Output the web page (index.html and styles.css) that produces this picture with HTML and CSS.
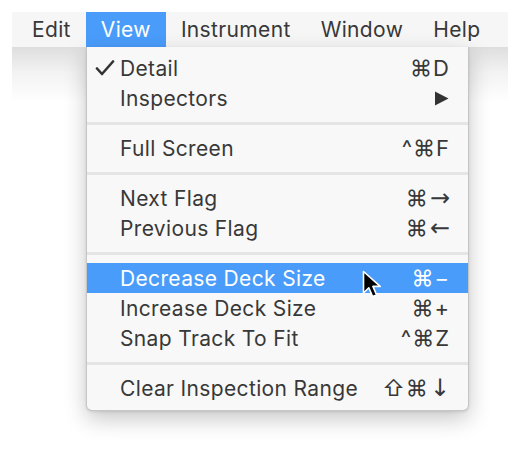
FILE: index.html
```html
<!DOCTYPE html>
<html>
<head>
<meta charset="utf-8">
<link rel="stylesheet" href="styles.css">
</head>
<body>
<div class="stage">
  <div class="menubar">
    <div class="mb-item">Edit</div>
    <div class="mb-item active">View</div>
    <div class="mb-item">Instrument</div>
    <div class="mb-item">Window</div>
    <div class="mb-item">Help</div>
  </div>
  <div class="bar-shadow"></div>

  <div class="menu">
    <div class="row">
      <span class="check"><svg width="20" height="16" viewBox="0 0 20 16"><path d="M2 8.5 L7 14 L18 1.5" fill="none" stroke="#333" stroke-width="2.6" stroke-linecap="round" stroke-linejoin="round"/></svg></span>
      <span class="label">Detail</span><span class="key">⌘D</span>
    </div>
    <div class="row">
      <span class="label">Inspectors</span>
      <span class="key"><svg class="sub" width="15" height="15" viewBox="0 0 15 15"><path d="M1 0.5 L14.5 7.5 L1 14.5 Z" fill="#333"/></svg></span>
    </div>
    <div class="sep"></div>
    <div class="row"><span class="label">Full Screen</span><span class="key">^⌘F</span></div>
    <div class="sep"></div>
    <div class="row"><span class="label">Next Flag</span><span class="key">⌘<span class="arrow">→</span></span></div>
    <div class="row"><span class="label">Previous Flag</span><span class="key">⌘<span class="arrow">←</span></span></div>
    <div class="sep"></div>
    <div class="row hl"><span class="label">Decrease Deck Size</span><span class="key">⌘−</span></div>
    <div class="row"><span class="label">Increase Deck Size</span><span class="key">⌘+</span></div>
    <div class="row"><span class="label">Snap Track To Fit</span><span class="key">^⌘Z</span></div>
    <div class="sep"></div>
    <div class="row"><span class="label">Clear Inspection Range</span><span class="key">⇧⌘<span class="arrow">↓</span></span></div>
  </div>

  <svg class="cursor" width="24" height="32" viewBox="0 0 24 32">
    <path d="M1.5 1.5 L1.5 23 L6.8 17.8 L10.6 26.6 L14.6 24.9 L10.9 16.4 L18.2 16.4 Z" fill="#000" stroke="#fff" stroke-width="1.6" stroke-linejoin="round"/>
  </svg>
</div>
</body>
</html>
```

FILE: styles.css
```css
html, body {
  margin: 0;
  padding: 0;
  background: #ffffff;
}
body {
  width: 521px;
  height: 452px;
  overflow: hidden;
  font-family: Inter, "Liberation Sans", sans-serif;
  color: #383838;
}
.stage {
  position: relative;
  width: 521px;
  height: 452px;
  padding-top: 12px;
  box-sizing: border-box;
}
.menubar {
  margin-left: 12px;
  width: 496px;
  height: 35px;
  background: #f6f6f6;
  display: flex;
  align-items: stretch;
  padding-left: 5px;
  box-sizing: border-box;
  font-size: 21px;
  letter-spacing: 0.35px;
}
.mb-item {
  display: flex;
  align-items: center;
  padding: 0 15px;
  line-height: 35px;
}
.mb-item.active {
  background: #4a9cfb;
  color: #ffffff;
}
.bar-shadow {
  margin-left: 12px;
  width: 496px;
  height: 55px;
  background: linear-gradient(to bottom, rgba(0,0,0,0.13), rgba(0,0,0,0.05) 45%, rgba(0,0,0,0));
}
.menu {
  position: absolute;
  left: 86px;
  top: 47px;
  width: 383px;
  padding: 6px 0 7px;
  box-sizing: border-box;
  background: #f8f8f8;
  border: 1px solid rgba(0,0,0,0.2);
  border-top: none;
  border-radius: 0 0 6px 6px;
  box-shadow: 0 8px 22px rgba(0,0,0,0.22), 0 1px 3px rgba(0,0,0,0.1);
  font-size: 21px;
  letter-spacing: 0.35px;
}
.row {
  position: relative;
  height: 30px;
  display: flex;
  align-items: center;
  padding: 0 18px 0 33px;
}
.row.hl {
  background: #4a9cfb;
  color: #ffffff;
}
.check {
  position: absolute;
  left: 8px;
  top: 7px;
  line-height: 0;
}
.label {
  flex: 1;
}
.key {
  display: flex;
  align-items: center;
  letter-spacing: 1px;
  font-size: 22px;
}
.arrow {
  font-family: "DejaVu Sans", sans-serif;
  font-size: 24px;
  letter-spacing: 0;
  margin-left: 1px;
}
.sub {
  margin-right: 1px;
}
.sep {
  height: 20px;
  display: flex;
  align-items: center;
}
.sep::before {
  content: "";
  display: block;
  width: 100%;
  height: 3px;
  background: #e5e5e5;
}
.cursor {
  position: absolute;
  left: 362px;
  top: 270px;
}
```
